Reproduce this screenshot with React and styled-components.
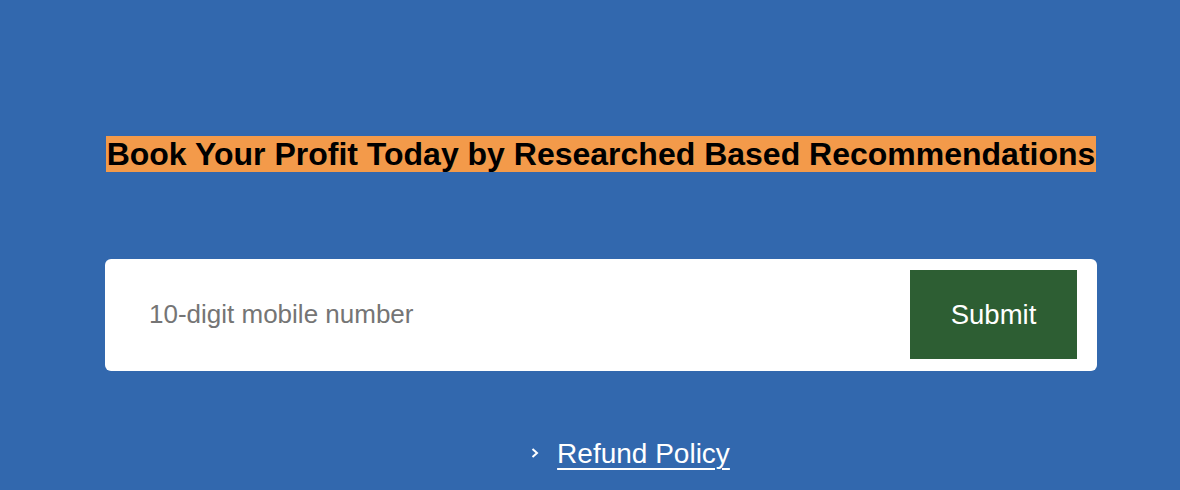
import React from 'react';
import styled, { createGlobalStyle } from 'styled-components';

const GlobalStyle = createGlobalStyle`
	html, body {
		margin: 0;
		padding: 0;
		background: #3268ae;
	}
	body {
		font-family: "Liberation Sans", Arial, sans-serif;
	}
`;

const Page = styled.div`
	width: 1180px;
	height: 490px;
	background: #3268ae;
	overflow: hidden;
`;

const Content = styled.section`
	width: 992px;
	margin-left: 105px;
	padding-top: 136px;
	display: flex;
	flex-direction: column;
	align-items: center;
`;

const Heading = styled.h1`
	margin: 0;
	font-size: 32px;
	line-height: 37px;
	font-weight: 700;
	color: #000;
	text-align: center;
	white-space: nowrap;

	span {
		background: #f39a4a;
		padding: 0 1px;
	}
`;

const Form = styled.form`
	margin-top: 86px;
	width: 100%;
	height: 112px;
	box-sizing: border-box;
	background: #fff;
	border-radius: 6px;
	display: flex;
	align-items: center;
	padding: 11px 20px 12px 44px;
	gap: 16px;
`;

const Input = styled.input`
	flex: 1;
	border: none;
	outline: none;
	font-family: inherit;
	font-size: 26px;
	color: #333;
	background: transparent;
	padding: 0;

	&::placeholder {
		color: #757575;
	}
`;

const Button = styled.button`
	width: 167px;
	height: 89px;
	border: none;
	background: #2d5e33;
	color: #fff;
	font-family: inherit;
	font-size: 27.5px;
	cursor: pointer;
`;

const LinkRow = styled.div`
	margin-top: 67px;
	display: flex;
	align-items: center;
	gap: 17px;
	padding-left: 58px;
`;

const Chevron = styled.span`
	display: flex;
	margin-top: -2px;
`;

const Link = styled.a`
	color: #fff;
	font-size: 28px;
	text-decoration: underline;
	text-underline-offset: 5px;
	text-decoration-thickness: 2px;
`;

export default function App() {
	return (
		<Page>
			<GlobalStyle />
			<Content>
				<Heading>
					<span>Book Your Profit Today by Researched Based Recommendations</span>
				</Heading>
				<Form onSubmit={(e) => e.preventDefault()}>
					<Input type="tel" placeholder="10-digit mobile number" />
					<Button type="submit">Submit</Button>
				</Form>
				<LinkRow>
					<Chevron>
						<svg width="10" height="12" viewBox="0 0 10 12">
							<path d="M2.5 2 L7 6 L2.5 10" fill="none" stroke="#fff" strokeWidth="2" />
						</svg>
					</Chevron>
					<Link href="#">Refund Policy</Link>
				</LinkRow>
			</Content>
		</Page>
	);
}
